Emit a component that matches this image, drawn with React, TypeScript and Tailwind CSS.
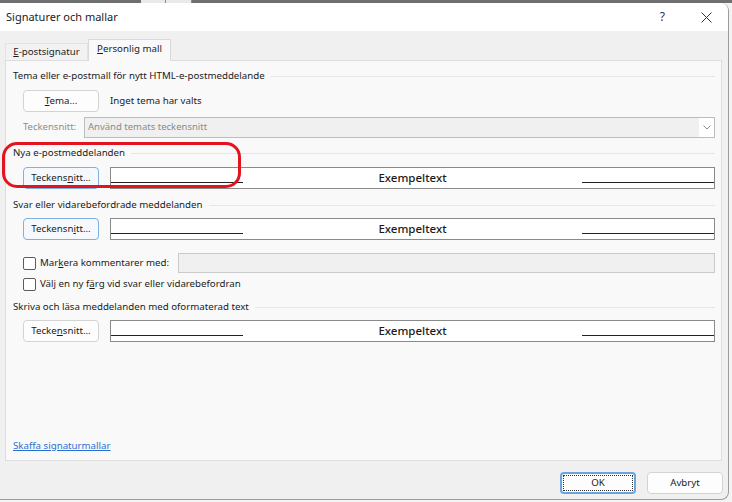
import React from 'react';

const Btn: React.FC<{ children: React.ReactNode; focused?: boolean; className?: string }> = ({ children, focused, className = '' }) => (
  <button
    className={`w-[76px] h-[22px] shrink-0 rounded-[4px] border text-[9.7px] leading-none text-[#1b1b1b] flex items-center justify-center ${
      focused ? 'border-[#7fb0e0] bg-[#f5f9fd]' : 'border-[#d3d3d3] bg-[#fdfdfd]'
    } ${className}`}
  >
    {children}
  </button>
);

const GroupHeader: React.FC<{ title: string; className?: string }> = ({ title, className = '' }) => (
  <div className={`h-[14px] flex items-center gap-[6px] ${className}`}>
    <span className="text-[9.7px] leading-none text-[#1b1b1b] whitespace-nowrap">{title}</span>
    <div className="flex-1 h-px bg-[#e6e6e6]" />
  </div>
);

const Preview: React.FC = () => (
  <div className="flex-1 h-[22px] ml-[11px] border border-[#8a8a8a] bg-white flex items-stretch">
    <div className="w-[132px] h-px bg-[#222] self-end mb-[5px]" />
    <div className="flex-1 flex items-center justify-center text-[11.5px] font-medium text-[#1b1b1b]">Exempeltext</div>
    <div className="w-[132px] h-px bg-[#222] self-end mb-[5px]" />
  </div>
);

const Checkbox: React.FC = () => (
  <div className="w-[13px] h-[13px] rounded-[2px] border border-[#5c5c5c] bg-white shrink-0" />
);

export default function App() {
  return (
    <div className="w-[732px] h-[502px] bg-[#f3f3f3] overflow-hidden font-['Noto_Sans',sans-serif] relative">
      {/* desktop strip behind the dialog */}
      <div className="h-[3px] flex bg-[#6f6f6f]">
        <div className="w-[141px]" />
        <div className="w-[25px] bg-[#e9e9e9] border-r border-[#8a8a8a]" />
        <div className="w-[26px] bg-[#e9e9e9] border-r border-[#8a8a8a]" />
      </div>

      <div className="w-[729px] h-[497px] bg-[#f0f0f0] border-r border-b border-[#9c9c9c] rounded-tr-[8px] rounded-br-[8px] flex flex-col overflow-hidden">
        {/* title bar */}
        <div className="h-[28px] bg-white flex items-center pl-[6px] shrink-0">
          <span className="text-[11px] text-[#1b1b1b]">Signaturer och mallar</span>
          <span className="ml-auto text-[12px] text-[#333] mr-[36px]">?</span>
          <svg width="11" height="11" viewBox="0 0 11 11" className="mr-[16px]">
            <path d="M0.5 0.5L10.5 10.5M10.5 0.5L0.5 10.5" stroke="#333" strokeWidth="1" />
          </svg>
        </div>

        {/* tabs */}
        <div className="mt-[8px] ml-[5px] h-[21px] flex items-end shrink-0 relative z-10">
          <div className="w-[83px] h-[17px] border border-b-0 border-[#e2e2e2] bg-[#f2f2f2] flex items-center justify-center text-[9.7px] leading-none text-[#1b1b1b]">
            <span><span className="underline">E</span>-postsignatur</span>
          </div>
          <div className="w-[83px] h-[22px] -mb-px border border-b-0 border-[#dadada] bg-[#f9f9f9] flex items-center justify-center pb-[3px] text-[9.7px] leading-none text-[#1b1b1b]">
            <span><span className="underline">P</span>ersonlig mall</span>
          </div>
        </div>

        {/* tab panel */}
        <div className="ml-[5px] w-[717px] h-[401px] border border-[#dedede] bg-[#f9f9f9] pl-[7px] pr-[6px] flex flex-col shrink-0">
          <GroupHeader title="Tema eller e-postmall för nytt HTML-e-postmeddelande" className="mt-[8px]" />
          <div className="mt-[7px] ml-[10px] flex items-center">
            <Btn className="h-[21px]">
              <span><span className="underline">T</span>ema...</span>
            </Btn>
            <span className="ml-[11px] text-[9.7px] text-[#1b1b1b]">Inget tema har valts</span>
          </div>
          <div className="mt-[5px] ml-[10px] flex items-center">
            <span className="w-[61px] text-[9.5px] text-[#8c8c8c]">Teckensnitt:</span>
            <div className="flex-1 h-[21px] border border-[#bdbdbd] bg-[#f0f0f0] flex items-center pl-[3px]">
              <span className="text-[9.5px] text-[#8a8a8a]">Använd temats teckensnitt</span>
              <div className="ml-auto w-[15px] h-[19px] bg-white flex items-center justify-center">
                <svg width="8" height="5" viewBox="0 0 8 5">
                  <path d="M0.5 0.5L4 4L7.5 0.5" stroke="#8a8a8a" fill="none" strokeWidth="1" />
                </svg>
              </div>
            </div>
          </div>

          <GroupHeader title="Nya e-postmeddelanden" className="mt-[8px]" />
          <div className="mt-[7px] ml-[10px] flex items-center">
            <Btn focused>
              <span>Teckens<span className="underline">n</span>itt...</span>
            </Btn>
            <Preview />
          </div>

          <GroupHeader title="Svar eller vidarebefordrade meddelanden" className="mt-[9px]" />
          <div className="mt-[6px] ml-[10px] flex items-center">
            <Btn focused>
              <span>Teckensn<span className="underline">i</span>tt...</span>
            </Btn>
            <Preview />
          </div>
          <div className="mt-[13px] ml-[10px] h-[20px] flex items-center">
            <Checkbox />
            <span className="ml-[4px] w-[138px] text-[9.7px] text-[#1b1b1b] whitespace-nowrap">
              Mar<span className="underline">k</span>era kommentarer med:
            </span>
            <div className="flex-1 h-[20px] border border-[#cacaca] bg-[#f0f0f0]" />
          </div>
          <div className="mt-[4px] ml-[10px] h-[14px] flex items-center">
            <Checkbox />
            <span className="ml-[4px] text-[9.7px] text-[#1b1b1b] whitespace-nowrap">
              Välj en ny f<span className="underline">ä</span>rg vid svar eller vidarebefordran
            </span>
          </div>

          <GroupHeader title="Skriva och läsa meddelanden med oformaterad text" className="mt-[9px]" />
          <div className="mt-[6px] ml-[10px] flex items-center">
            <Btn>
              <span>Tecke<span className="underline">n</span>snitt...</span>
            </Btn>
            <Preview />
          </div>

          <div className="mt-auto mb-[7px] h-[14px] flex items-center">
            <span className="text-[9.7px] text-[#2a6fd3] underline">Skaffa signaturmallar</span>
          </div>
        </div>

        {/* footer buttons */}
        <div className="mt-[11px] flex justify-end gap-[11px] pr-[5px]">
          <button className="w-[76px] h-[22px] rounded-[4px] border-2 border-[#6aa5e0] bg-[#fdfdfd] p-px">
            <div className="w-full h-full border border-dotted border-[#333] flex items-center justify-center text-[9.7px] leading-none text-[#1b1b1b]">
              OK
            </div>
          </button>
          <Btn>Avbryt</Btn>
        </div>
      </div>

      {/* red highlight drawn over the dialog */}
      <div className="absolute left-[2px] top-[142px] w-[239px] h-[46px] rounded-[15px] border-[3px] border-[#e3141f] pointer-events-none" />
    </div>
  );
}
